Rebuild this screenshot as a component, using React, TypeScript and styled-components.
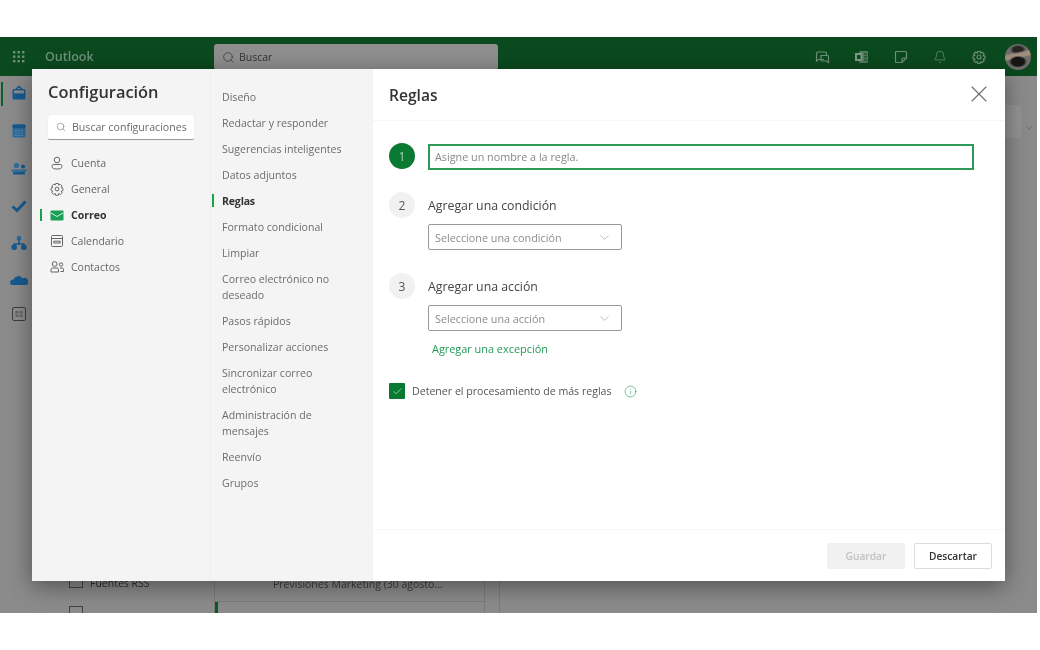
import React from "react";
import styled, { createGlobalStyle } from "styled-components";
import { Bell, Check, ChevronDown, Info, Search, X } from "lucide-react";

const Global = createGlobalStyle`
  html, body { margin: 0; padding: 0; background: #fff; }
  body { font-family: "Open Sans", "Noto Sans", "Liberation Sans", sans-serif; }
`;

const Page = styled.div`
  width: 1040px; height: 650px; background: #fff; padding-top: 37px; box-sizing: border-box; overflow: hidden;
  filter: blur(0.7px);
`;
const Frame = styled.div`
  position: relative; width: 1037px; height: 576px; background: #8b8b8b; overflow: hidden;
  display: flex; flex-direction: column;
`;
const Header = styled.header`
  height: 39px; flex: none; background: #0b4a1f; display: flex; align-items: flex-start; padding: 7px 6px 0 12px; box-sizing: border-box;
`;
const Waffle = styled.svg`width: 14px; height: 14px; margin-top: 6px; flex: none;`;
const Brand = styled.div`font-size: 12.5px; line-height: 26px; color: #6f9079; margin-left: 19px; width: 169px; font-weight: 600;`;
const SearchBar = styled.div`
  width: 284px; height: 26px; background: #8f8f8f; border-radius: 3px; display: flex; align-items: center; gap: 4px; padding-left: 8px; box-sizing: border-box;
  font-size: 10.5px; color: #333; font-weight: 500;
`;
const HeaderIcons = styled.div`margin-left: auto; display: flex; align-items: center; height: 26px; color: #6f9079;`;
const HeaderSlot = styled.div`width: 39px; display: flex; justify-content: center;`;
const Avatar = styled.div`
  width: 26px; height: 26px; border-radius: 50%; margin-left: 7px;
  background:
    radial-gradient(ellipse 9px 6px at 50% 68%, #161616 0 70%, transparent 100%),
    linear-gradient(168deg, transparent 32%, #a08d7e 40% 50%, transparent 56%),
    radial-gradient(ellipse 8px 5px at 50% 22%, #242424 0 60%, transparent 100%),
    #6f6c6b;
`;
const Body = styled.div`flex: 1; display: flex; min-height: 0;`;
const Rail = styled.nav`width: 38px; flex: none; display: flex; flex-direction: column; align-items: center; margin-top: -2px;`;
const RailSlot = styled.div<{ $h: number; $active?: boolean }>`
  height: ${p => p.$h}px; width: 38px; display: flex; justify-content: center; align-items: center; position: relative;
  ${p => p.$active ? `&::before{content:"";position:absolute;left:1px;top:8px;width:2px;height:24px;background:#0c5f29;}` : ""}
`;
const Folder = styled.div`
  width: 176px; flex: none; display: flex; flex-direction: column; justify-content: flex-end; padding-left: 31px; margin-bottom: -12px;
  box-sizing: border-box; font-size: 10.5px; color: #2e2e2e;
`;
const FolderRow = styled.div`display: flex; align-items: center; gap: 7px; height: 28px;`;
const FolderBox = styled.span`width: 12px; height: 8px; border: 1px solid #444; display: block; flex: none;`;
const List = styled.div`
  width: 271px; flex: none; border-left: 1px solid #7b7b7b; border-right: 1px solid #7b7b7b; box-sizing: border-box;
  display: flex; flex-direction: column; justify-content: flex-end; font-size: 10.5px; color: #3a3a3a;
`;
const ListText = styled.div`padding-left: 58px; height: 27px; line-height: 20px; border-bottom: 1px solid #7b7b7b; white-space: nowrap;`;
const ListMark = styled.div`height: 11px; width: 3px; background: #0b5a27;`;
const Reading = styled.div`margin-left: 14px; flex: 1; border-left: 1px solid #7b7b7b; position: relative;`;
const Dropdown = styled.div`
  position: absolute; right: 16px; top: 29px; width: 22px; height: 33px; border-radius: 3px; background: #939393;
`;
const DropChevron = styled.div`position: absolute; right: 3px; top: 47px; color: #666; display: flex;`;

const Modal = styled.section`
  position: absolute; left: 32px; top: 32px; width: 973px; height: 512px; background: #fff; display: flex;
  box-shadow: 0 5px 22px rgba(0,0,0,.42);
`;
const SidePane = styled.aside`
  width: 179px; flex: none; background: #f4f4f4; border-right: 1px solid #efefef; box-sizing: border-box; padding: 11px 16px 0 16px;
`;
const Title = styled.h1`font-size: 16.4px; line-height: 24px; font-weight: 600; color: #333; margin: 0 0 11px;`;
const SettingsSearch = styled.div`
  width: 146px; height: 25px; background: #fff; border-bottom: 1px solid #999; box-sizing: border-box; border-radius: 2px;
  display: flex; align-items: center; gap: 6px; padding-left: 8px; font-size: 10.6px; color: #6b6b6b; white-space: nowrap; margin-bottom: 10px;
  box-shadow: 0 0 1px rgba(0,0,0,.15);
`;
const NavRow = styled.div<{ $on?: boolean }>`
  height: 26px; display: flex; align-items: center; gap: 7px; font-size: 10.5px; position: relative; padding-left: 2px;
  color: ${p => p.$on ? "#333" : "#666"}; font-weight: ${p => p.$on ? 700 : 400};
  ${p => p.$on ? `&::before{content:"";position:absolute;left:-8px;top:7px;width:2px;height:12px;background:#16a34a;}` : ""}
`;
const NavIcon = styled.svg`width: 14px; height: 14px; flex: none; fill: none; stroke: #666; stroke-width: 1;`;
const SubPane = styled.nav`
  width: 162px; flex: none; background: #f4f4f4; box-sizing: border-box; padding: 15px 20px 0 11px;
`;
const SubItem = styled.div<{ $on?: boolean }>`
  font-size: 10.6px; line-height: 16px; padding: 5px 0; position: relative; white-space: pre-line;
  color: ${p => p.$on ? "#333" : "#6c6c6c"}; font-weight: ${p => p.$on ? 700 : 400};
  letter-spacing: ${p => p.$on ? "-0.2px" : "0"};
  ${p => p.$on ? `&::before{content:"";position:absolute;left:-10px;top:6px;width:2px;height:13px;background:#16a34a;}` : ""}
`;
const Content = styled.div`flex: 1; display: flex; flex-direction: column; min-width: 0;`;
const ContentHead = styled.div`
  height: 52px; flex: none; border-bottom: 1px solid #f6f6f6; display: flex; align-items: center; justify-content: space-between; padding: 0 12px 0 16px; box-sizing: border-box;
`;
const H2 = styled.h2`font-size: 15.6px; font-weight: 600; margin: 0; color: #333; line-height: 20px;`;
const CloseBtn = styled.div`display: flex; color: #6f6f6f; margin-top: -2px;`;
const Form = styled.div`flex: 1; padding: 23px 0 0 16px; display: flex; flex-direction: column;`;
const Step = styled.div<{ $mb: number }>`display: flex; gap: 13px; margin-bottom: ${p => p.$mb}px;`;
const Bubble = styled.div<{ $on?: boolean }>`
  width: 26px; height: 26px; border-radius: 50%; flex: none; display: flex; align-items: center; justify-content: center; font-size: 12px;
  margin-top: -1px;
  background: ${p => p.$on ? "#0a7a32" : "#f1f1f1"}; color: ${p => p.$on ? "#a5d6b3" : "#555"};
`;
const StepBody = styled.div`display: flex; flex-direction: column; align-items: flex-start;`;
const NameInput = styled.div`
  width: 546px; height: 26px; border: 2px solid #2e9a57; box-sizing: border-box; padding-left: 5px; font-size: 10.8px; line-height: 22px; color: #888;
`;
const StepLabel = styled.div`font-size: 12.3px; line-height: 26px; color: #444; margin: 0 0 5px;`;
const Select = styled.div`
  width: 194px; height: 26px; border: 1px solid #9a9a9a; border-radius: 2px; box-sizing: border-box; display: flex; align-items: center; justify-content: space-between;
  padding: 1px 9px 0 6px; font-size: 10.8px; color: #8c8c8c;
`;
const AddLink = styled.div`font-size: 10.9px; line-height: 16px; color: #1f9a55; margin: 10px 0 0 4px; font-weight: 500;`;
const CheckRow = styled.div`display: flex; align-items: center; margin-top: 8px; font-size: 10.6px; color: #555;`;
const CheckBox = styled.div`width: 16px; height: 16px; background: #0a7a32; border-radius: 1px; color: #bfe3ca; display: flex; align-items: center; justify-content: center; margin-right: 7px;`;
const InfoMark = styled.span`display: flex; color: #2fa35e; margin-left: 12px;`;
const Footer = styled.div`
  height: 52px; flex: none; border-top: 1px solid #f6f6f6; display: flex; justify-content: flex-end; gap: 9px; padding: 13px 13px 0 0; box-sizing: border-box;
`;
const Btn = styled.div<{ $off?: boolean }>`
  height: 26px; width: 78px; border-radius: 2px; box-sizing: border-box; display: flex; align-items: center; justify-content: center;
  font-size: 10.2px; font-weight: 600;
  ${p => p.$off ? "background:#f1f1f1;color:#c2c2c2;" : "background:#fff;color:#333;border:1px solid #dcdcdc;"}
`;

const BLUE = "#165b91";
const railIcon = (n: number) => {
  switch (n) {
    case 0: return <g><path d="M6 5 L9 2.6 L12 5" fill="none" stroke={BLUE} strokeWidth="1.6" /><path d="M2.5 6.5 Q2.5 5 4 5 H14 Q15.5 5 15.5 6.5 V14 Q15.5 15.5 14 15.5 H4 Q2.5 15.5 2.5 14 Z" fill={BLUE} /><rect x="4" y="6.4" width="10" height="3" fill="#8b8b8b" /></g>;
    case 1: return <g><rect x="2.5" y="2.5" width="13" height="13" rx="1.5" fill="#2d6e9e" /><rect x="2.5" y="2.5" width="13" height="3.5" rx="1" fill={BLUE} /><path d="M5 8.5H13M5 11H13M5 13.5H13" stroke="#5d8db0" strokeWidth="1" strokeDasharray="2 1" /></g>;
    case 2: return <g><circle cx="6.5" cy="5.5" r="2.6" fill="#2d6e9e" /><circle cx="13" cy="6.5" r="2.1" fill={BLUE} /><rect x="1.5" y="9.5" width="15" height="2.2" rx="1" fill="#2d6e9e" /><rect x="3" y="12" width="12" height="2.6" rx="1.2" fill={BLUE} /></g>;
    case 3: return <path d="M2.5 9.5 L7 13.5 L15.5 4.5" fill="none" stroke={BLUE} strokeWidth="3" />;
    case 4: return <g fill={BLUE}><circle cx="9" cy="4.2" r="2.4" fill="#2d6e9e" /><circle cx="4.2" cy="13.2" r="2.8" /><circle cx="13.8" cy="13.2" r="2.8" /><path d="M9 5V10M4.2 13V10H13.8V13" stroke={BLUE} strokeWidth="1.5" fill="none" /></g>;
    case 5: return <path d="M1.5 14 A3 3 0 0 1 3.5 8.5 A5 5 0 0 1 12.5 7.5 A3.4 3.4 0 0 1 16.5 14 Z" fill={BLUE} />;
    default: return <g fill="none" stroke="#3d3d3d"><rect x="2.5" y="2.5" width="13" height="13" rx="1.5" /><rect x="5.5" y="6" width="7" height="6" fill="#666" stroke="none" /><path d="M9 6V12M5.5 9H12.5" stroke="#8b8b8b" /></g>;
  }
};

const GEAR = "M5.7 1.5h2.6l.5 1.7 1.5-.9 1.8 1.8-.9 1.5 1.7.5v2.6l-1.7.5.9 1.5-1.8 1.8-1.5-.9-.5 1.7H5.7l-.5-1.7-1.5.9-1.8-1.8.9-1.5-1.7-.5V5.9l1.7-.5-.9-1.5 1.8-1.8 1.5.9z";

const railHeights = [38, 38, 37, 37, 38, 35, 34];
const subItems = [
  "Diseño", "Redactar y responder", "Sugerencias inteligentes", "Datos adjuntos", "Reglas", "Formato condicional", "Limpiar",
  "Correo electrónico no\ndeseado", "Pasos rápidos", "Personalizar acciones", "Sincronizar correo\nelectrónico", "Administración de\nmensajes", "Reenvío", "Grupos",
];

export default function App() {
  return (
    <Page>
      <Global />
      <Frame>
        <Header>
          <Waffle viewBox="0 0 14 14" fill="#6f9079">
            {[1, 5.5, 10].flatMap(y => [1, 5.5, 10].map(x => <rect key={`${x}${y}`} x={x} y={y} width="2.4" height="2.4" />))}
          </Waffle>
          <Brand>Outlook</Brand>
          <SearchBar><Search size={13} strokeWidth={1.3} color="#333" />Buscar</SearchBar>
          <HeaderIcons>
            <HeaderSlot>
              <svg width="15" height="14" viewBox="0 0 15 14" fill="none" stroke="currentColor" strokeWidth="1.2">
                <path d="M9 9.5H3.5L1.5 11V3.5Q1.5 2 3 2H10Q11.5 2 11.5 3.5V5" />
                <path d="M6 5.5H12.5Q13.5 5.5 13.5 6.5V12.5L11.5 11H7Q6 11 6 10Z" />
              </svg>
            </HeaderSlot>
            <HeaderSlot>
              <svg width="15" height="14" viewBox="0 0 15 14">
                <rect x="5" y="1" width="9" height="12" rx="1" fill="#55795f" />
                <rect x="1" y="3" width="7.5" height="8" fill="#7d9b85" />
                <rect x="3" y="5" width="3.5" height="4" fill="#0b4a1f" />
                <path d="M10 4H13M10 7H13M10 10H13" stroke="#0b4a1f" strokeWidth="1" />
              </svg>
            </HeaderSlot>
            <HeaderSlot>
              <svg width="14" height="14" viewBox="0 0 14 14" fill="none" stroke="currentColor" strokeWidth="1.2">
                <path d="M2.5 1.5H11.5Q12.5 1.5 12.5 2.5V8L8 12.5H2.5Q1.5 12.5 1.5 11.5V2.5Q1.5 1.5 2.5 1.5Z" />
                <path d="M12.5 8H9Q8 8 8 9V12.5" />
              </svg>
            </HeaderSlot>
            <HeaderSlot><Bell size={14} strokeWidth={1.3} /></HeaderSlot>
            <HeaderSlot>
              <svg width="14" height="14" viewBox="0 0 14 14" fill="none" stroke="currentColor" strokeWidth="1.2">
                <path d={GEAR} /><circle cx="7" cy="7" r="2" />
              </svg>
            </HeaderSlot>
            <Avatar />
          </HeaderIcons>
        </Header>
        <Body>
          <Rail>
            {railHeights.map((h, i) => (
              <RailSlot key={i} $h={h} $active={i === 0}>
                <svg width="18" height="18" viewBox="0 0 18 18">{railIcon(i)}</svg>
              </RailSlot>
            ))}
          </Rail>
          <Folder>
            <FolderRow><FolderBox />Fuentes RSS</FolderRow>
            <FolderRow><FolderBox /></FolderRow>
          </Folder>
          <List>
            <ListText>Previsiones Marketing (30 agosto...</ListText>
            <ListMark />
          </List>
          <Reading>
            <Dropdown />
            <DropChevron><ChevronDown size={10} /></DropChevron>
          </Reading>
        </Body>
        <Modal>
          <SidePane>
            <Title>Configuración</Title>
            <SettingsSearch><Search size={10} strokeWidth={1.3} />Buscar configuraciones</SettingsSearch>
            <NavRow>
              <NavIcon viewBox="0 0 14 14"><circle cx="7" cy="4" r="2.8" /><path d="M3.5 8.5H10.5Q12 8.5 12 10V10.5Q12 13 7 13Q2 13 2 10.5V10Q2 8.5 3.5 8.5Z" /></NavIcon>
              Cuenta
            </NavRow>
            <NavRow>
              <NavIcon viewBox="0 0 14 14"><path d={GEAR} /><circle cx="7" cy="7" r="1.9" /></NavIcon>
              General
            </NavRow>
            <NavRow $on>
              <svg width="14" height="14" viewBox="0 0 14 14" style={{ flex: "none" }}>
                <rect x="0.5" y="2.5" width="13" height="10" rx="1" fill="#1aa055" />
                <path d="M1 5 L7 8.5 L13 5" fill="none" stroke="#d8f0e0" strokeWidth="1" />
              </svg>
              Correo
            </NavRow>
            <NavRow>
              <NavIcon viewBox="0 0 14 14"><rect x="1.5" y="1.5" width="11" height="11" rx="1" /><path d="M1.5 4.5H12.5M3.8 7.2H10.2V9H3.8Z" /></NavIcon>
              Calendario
            </NavRow>
            <NavRow>
              <NavIcon viewBox="0 0 14 14"><circle cx="4.7" cy="4" r="2.4" /><circle cx="11" cy="4.5" r="1.7" /><path d="M1 12V9.5Q1 8 2.5 8H7Q8.5 8 8.5 9.5V12ZM10 8H12Q13.5 8 13.5 9.5V11.5H10.5" /></NavIcon>
              Contactos
            </NavRow>
          </SidePane>
          <SubPane>
            {subItems.map(s => <SubItem key={s} $on={s === "Reglas"}>{s}</SubItem>)}
          </SubPane>
          <Content>
            <ContentHead>
              <H2>Reglas</H2>
              <CloseBtn><X size={28} strokeWidth={1} /></CloseBtn>
            </ContentHead>
            <Form>
              <Step $mb={23}>
                <Bubble $on>1</Bubble>
                <StepBody><NameInput>Asigne un nombre a la regla.</NameInput></StepBody>
              </Step>
              <Step $mb={24}>
                <Bubble>2</Bubble>
                <StepBody>
                  <StepLabel>Agregar una condición</StepLabel>
                  <Select>Seleccione una condición<ChevronDown size={15} strokeWidth={0.9} /></Select>
                </StepBody>
              </Step>
              <Step $mb={18}>
                <Bubble>3</Bubble>
                <StepBody>
                  <StepLabel>Agregar una acción</StepLabel>
                  <Select>Seleccione una acción<ChevronDown size={15} strokeWidth={0.9} /></Select>
                  <AddLink>Agregar una excepción</AddLink>
                </StepBody>
              </Step>
              <CheckRow>
                <CheckBox><Check size={11} strokeWidth={1.5} /></CheckBox>
                Detener el procesamiento de más reglas
                <InfoMark><Info size={13} strokeWidth={1.2} /></InfoMark>
              </CheckRow>
            </Form>
            <Footer>
              <Btn $off>Guardar</Btn>
              <Btn>Descartar</Btn>
            </Footer>
          </Content>
        </Modal>
      </Frame>
    </Page>
  );
}
